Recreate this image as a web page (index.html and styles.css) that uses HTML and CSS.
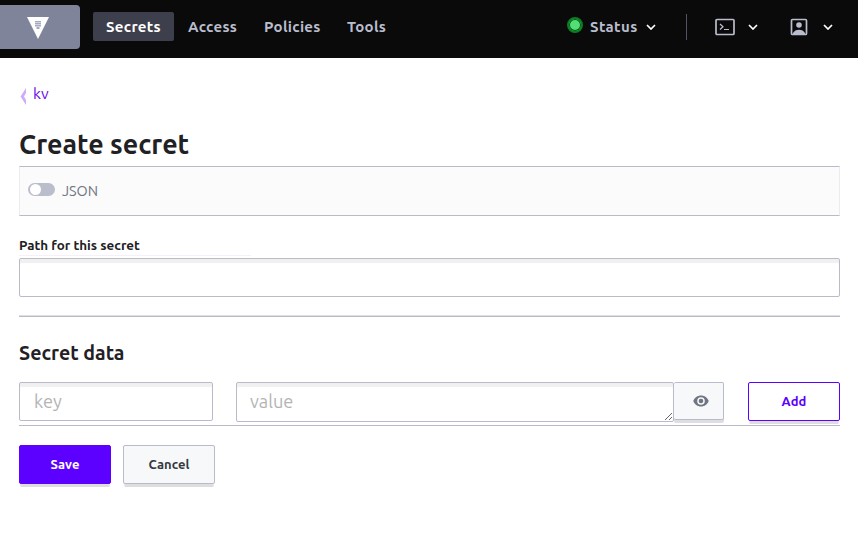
FILE: index.html
```
<!DOCTYPE html>
<html lang="en">
<head>
<meta charset="utf-8">
<title>Vault</title>
<link rel="stylesheet" href="styles.css">
</head>
<body>
<header class="topbar">
  <a class="logo"><svg width="22" height="22" viewBox="0 0 22 22"><path d="M0 0H22L11 22Z" fill="#fff"/><path d="M8 4h6v1.600H8zM8 6h6v1.600H8zM8 8h6v1.600H8zM9.500 10h3v2h-3z" fill="#a5aabd"/></svg></a>
  <nav class="nav">
    <a class="link active"><span class="t-secrets">Secrets</span></a>
    <a class="link"><span class="t-access">Access</span></a>
    <a class="link"><span class="t-policies">Policies</span></a>
    <a class="link"><span class="t-tools">Tools</span></a>
  </nav>
  <div class="tools">
    <span class="dot"></span>
    <span class="status">Status</span>
    <svg class="chev" width="10" height="6" viewBox="0 0 10 6"><path d="M1 1l4 4 4-4"/></svg>
    <span class="divider"></span>
    <svg class="console" width="20" height="18" viewBox="0 0 20 18"><rect x="1" y="1.500" width="18" height="15" rx="1"/><path d="M5 6l3 2.700L5 11.500M9 11.500h5" stroke-width="1.200"/></svg>
    <svg class="chev" width="10" height="6" viewBox="0 0 10 6"><path d="M1 1l4 4 4-4"/></svg>
    <svg class="user" width="18" height="18" viewBox="0 0 18 18"><rect x="1.500" y="1.500" width="15" height="15" rx="1"/><circle cx="9" cy="7" r="2.800"/><path class="body" d="M3 16.500v-1.500c2-4.500 10-4.500 12 0v1.500z"/></svg>
    <svg class="chev" width="10" height="6" viewBox="0 0 10 6"><path d="M1 1l4 4 4-4"/></svg>
  </div>
</header>
<main class="page">
  <a class="crumb"><svg width="7" height="17" viewBox="0 0 7 17"><path d="M6 0v5L4 8.500 6 12v5L.5 8.500Z"/></svg><span>kv</span></a>
  <h1>Create secret</h1>
  <div class="toolbar"><span class="switch"></span><label>JSON</label></div>
  <div class="path-label"><label>Path for this secret</label></div>
  <input class="field path" type="text">
  <hr>
  <h2>Secret data</h2>
  <div class="row">
    <input class="field key" placeholder="key">
    <textarea class="field value" placeholder="value"></textarea>
    <button class="eye"><svg width="16" height="12" viewBox="0 0 16 12"><path fill-rule="evenodd" d="M8 .5C4.500.5 1.500 2.700.3 6c1.200 3.300 4.200 5.500 7.700 5.500s6.500-2.200 7.700-5.500C14.500 2.700 11.500.5 8 .5zM8 9.800a3.800 3.800 0 1 1 0-7.600 3.800 3.800 0 0 1 0 7.600z"/><circle cx="8" cy="6" r="2.300"/></svg></button>
    <button class="btn add">Add</button>
  </div>
  <div class="actions">
    <button class="btn save">Save</button>
    <button class="btn cancel">Cancel</button>
  </div>
</main>
</body>
</html>
```
FILE: styles.css
```
* { box-sizing: border-box; }
body { margin: 0; background: #fff; color: #1f2124; font-family: Ubuntu, "Noto Sans", sans-serif; }
svg { display: block; flex: none; }
h1, h2 { margin: 0; white-space: nowrap; }
.topbar { height: 58px; background: #0a0a0a; display: flex; align-items: flex-start; padding-top: 5px; }
.logo { width: 80px; height: 44px; background: #7f849a; border-radius: 0 4px 4px 0; padding: 12px 0 0 27px; }
.nav { display: flex; gap: 1px; margin: 7px 0 0 13px; }
.link { height: 29px; padding: 0 13px; line-height: 29px; font-size: 15px; letter-spacing: .3px; font-weight: 700; color: #babdcd; border-radius: 2px; white-space: nowrap; }
.link span { display: block; }
.active { background: #3d404c; color: #fff; }
.t-secrets { width: 55px; }
.t-access { width: 49px; }
.t-policies { width: 56px; }
.t-tools { width: 41px; }
.tools { height: 44px; margin-left: 166px; display: flex; align-items: center; color: #babdcd; }
.dot { width: 16px; height: 16px; border: 2px solid #0b7e22; border-radius: 50%; background: #52dd75; margin-bottom: 5px; box-shadow: inset 0 0 0 1px #07501a; }
.status { width: 49px; margin: 0 7px; padding-bottom: 2px; font-size: 15px; letter-spacing: .4px; font-weight: 700; }
.chev { fill: none; stroke: #fff; stroke-width: 1.700; }
.divider { width: 1px; height: 26px; margin: 0 28px 0 30px; background: #525561; }
.console { fill: none; stroke: #babdcd; stroke-width: 1.700; margin-right: 13px; }
.user { margin: 0 15px 0 32px; fill: #babdcd; }
.user rect { fill: none; stroke: #babdcd; stroke-width: 1.700; }
.page { padding: 27px 18px 20px 19px; }
.crumb { display: flex; height: 18px; color: #6a0be8; font-size: 15.700px; line-height: 16px; }
.crumb svg { margin: 3px 6px 0 1px; fill: #ceacf9; }
h1 { margin-top: 21px; height: 42px; line-height: 40px; font-size: 26.850px; }
.toolbar { height: 50px; border: 1px solid #ebebf0; border-top-color: #babbca; border-bottom-color: #babbca; background: #fbfbfc; display: flex; align-items: center; padding-left: 8px; color: #6f7682; font-size: 14.400px; }
.switch { width: 27px; height: 13px; margin: -3px 7px 0 0; border-radius: 7px; background: #babdcc; padding: 1px 2px; }
.switch::before { content: ""; display: block; width: 11px; height: 11px; border-radius: 50%; background: #fff; }
.path-label { width: 232px; height: 40px; border-bottom: 1px solid #f6f0fd; padding-top: 21px; font-size: 13.400px; line-height: 18px; font-weight: 700; }
.field { display: block; margin: 0; border: 1px solid #babbca; border-radius: 2px; background: #fff; box-shadow: inset 0 4px 1px #f0f0f1; outline: 0; font: 18.200px Ubuntu, "Noto Sans", sans-serif; padding: 0 14px; }
.field::placeholder { color: #b4b4b4; opacity: 1; }
.path { width: 821px; height: 39px; margin-top: 2px; }
hr { height: 2px; margin: 18px 0 0; border: 0; border-top: 1px solid #dfdfe6; background: #babbca; }
h2 { height: 64px; padding-top: 22px; line-height: 28px; font-size: 19.600px; }
.row { height: 44px; margin-top: 1px; border-bottom: 1px solid #babbca; display: flex; align-items: flex-start; }
.key { width: 194px; height: 39px; margin-right: 23px; padding-bottom: 2px; }
.value { width: 438px; height: 40px; padding: 5px 13px 0; line-height: 26px; resize: both; overflow: hidden; }
button { font: 700 13px Ubuntu, "Noto Sans", sans-serif; padding: 0; margin: 0; border: 1px solid #babbca; border-radius: 2px; background: #f7f8fa; color: #363941; }
.eye { width: 50px; height: 38px; border-left: 0; box-shadow: 0 3px 0 #dedee1; display: flex; align-items: center; justify-content: center; padding-left: 4px; fill: #6f7682; }
.btn { width: 92px; height: 39px; padding-bottom: 2px; letter-spacing: .1px; box-shadow: 0 5px 0 -2px #dedee1, 0 4px 0 -1px #ebebed; }
.add { margin-left: 24px; background: #fff; border-color: #5c00ff; color: #5c00ff; }
.actions { display: flex; gap: 12px; margin-top: 19px; }
.save { background: #5c00ff; border-color: #5c00ff; color: #fff; }
```
